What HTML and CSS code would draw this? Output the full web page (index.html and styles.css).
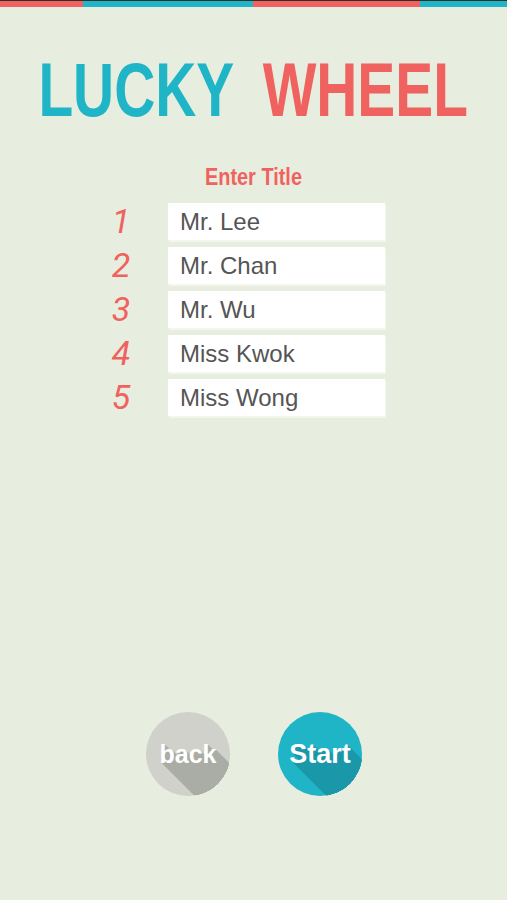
FILE: index.html
```html
<!DOCTYPE html>
<html>
<head>
    <title>Lucky Wheel</title>
    <link rel="stylesheet" href="styles.css">
</head>
<body>
    <div class="topbar">
        <span class="seg red"></span>
        <span class="seg teal"></span>
        <span class="seg red"></span>
        <span class="seg teal"></span>
    </div>

    <h1 class="title"><span class="narrow"><span class="lucky">LUCKY</span> <span class="wheel">WHEEL</span></span></h1>

    <div class="names">
        <h2 class="names-title"><span class="narrow">Enter Title</span></h2>
        <ol class="name-list">
            <li class="name-row"><span class="name-num">1</span><input class="name-input" type="text" value="Mr. Lee"></li>
            <li class="name-row"><span class="name-num">2</span><input class="name-input" type="text" value="Mr. Chan"></li>
            <li class="name-row"><span class="name-num">3</span><input class="name-input" type="text" value="Mr. Wu"></li>
            <li class="name-row"><span class="name-num">4</span><input class="name-input" type="text" value="Miss Kwok"></li>
            <li class="name-row"><span class="name-num">5</span><input class="name-input" type="text" value="Miss Wong"></li>
        </ol>
    </div>

    <div class="actions">
        <button class="round-btn back">back</button>
        <button class="round-btn start">Start</button>
    </div>
</body>
</html>
```

FILE: styles.css
```css
:root {
    --bg: #e7eedf;
    --teal: #1fb5c7;
    --teal-dark: #1a98a9;
    --red: #f0625f;
    --grey: #cfd1ca;
    --grey-dark: #aaaca6;
    --text: #555555;
}

body {
    margin: 0;
    background: var(--bg);
    font-family: 'Liberation Sans', Arial, sans-serif;
    min-height: 900px;
}

.topbar {
    display: grid;
    grid-template-columns: 83fr 170fr 167fr 87fr;
    height: 6px;
    border-top: 1px solid #2d2d2d;
}

.seg.red { background: var(--red); }
.seg.teal { background: var(--teal); }

/* no condensed face installed, so stretch/squeeze the bold one */
.narrow {
    display: inline-block;
    white-space: nowrap;
}

.title {
    margin: 45px 0 0;
    text-align: center;
    font-family: 'Liberation Sans', Arial, sans-serif;
    font-weight: 700;
    font-size: 58px;
    line-height: 76px;
    word-spacing: 14px;
}

.title .narrow {
    transform: scale(0.98, 1.31);
}

.lucky { color: var(--teal); }
.wheel { color: var(--red); }

.names {
    margin-top: 35px;
}

.names-title {
    margin: 0 0 12px;
    text-align: center;
    font-family: 'Liberation Sans', Arial, sans-serif;
    font-weight: 700;
    font-size: 24px;
    line-height: 28px;
    color: var(--red);
}

.names-title .narrow {
    transform: scaleX(0.83);
}

.name-list {
    list-style: none;
    margin: 0 0 0 100px;
    padding: 0;
    display: flex;
    flex-direction: column;
    gap: 7px;
}

.name-row {
    display: flex;
    align-items: center;
    gap: 26px;
}

.name-num {
    width: 42px;
    text-align: center;
    font-family: Roboto, sans-serif;
    font-style: italic;
    font-weight: 400;
    font-size: 34px;
    line-height: 37px;
    color: var(--red);
}

.name-input {
    width: 217px;
    height: 37px;
    box-sizing: border-box;
    border: none;
    padding: 0 12px;
    background: white;
    box-shadow: 1px 2px 0 rgba(255, 255, 255, 0.45);
    font-family: 'Liberation Sans', Arial, sans-serif;
    font-size: 24px;
    color: var(--text);
    outline: none;
}

.actions {
    display: flex;
    justify-content: center;
    gap: 48px;
    margin-top: 296px;
    padding-left: 1px;
}

.round-btn {
    width: 84px;
    height: 84px;
    padding: 0;
    border: none;
    border-radius: 50%;
    overflow: hidden;
    display: flex;
    align-items: center;
    justify-content: center;
    font-family: 'Liberation Sans', Arial, sans-serif;
    font-weight: 700;
    color: white;
    cursor: pointer;
}

.back {
    background: var(--grey);
    font-size: 25px;
    text-shadow: 1px 1px var(--grey-dark), 2px 2px var(--grey-dark), 3px 3px var(--grey-dark), 4px 4px var(--grey-dark),
        5px 5px var(--grey-dark), 6px 6px var(--grey-dark), 7px 7px var(--grey-dark), 8px 8px var(--grey-dark),
        9px 9px var(--grey-dark), 10px 10px var(--grey-dark), 11px 11px var(--grey-dark), 12px 12px var(--grey-dark),
        13px 13px var(--grey-dark), 14px 14px var(--grey-dark), 15px 15px var(--grey-dark), 16px 16px var(--grey-dark),
        17px 17px var(--grey-dark), 18px 18px var(--grey-dark), 19px 19px var(--grey-dark), 20px 20px var(--grey-dark),
        21px 21px var(--grey-dark), 22px 22px var(--grey-dark), 23px 23px var(--grey-dark), 24px 24px var(--grey-dark),
        25px 25px var(--grey-dark), 26px 26px var(--grey-dark), 27px 27px var(--grey-dark), 28px 28px var(--grey-dark),
        29px 29px var(--grey-dark), 30px 30px var(--grey-dark), 31px 31px var(--grey-dark), 32px 32px var(--grey-dark),
        33px 33px var(--grey-dark), 34px 34px var(--grey-dark), 35px 35px var(--grey-dark), 36px 36px var(--grey-dark),
        37px 37px var(--grey-dark), 38px 38px var(--grey-dark), 39px 39px var(--grey-dark), 40px 40px var(--grey-dark);
}

.start {
    background: var(--teal);
    font-size: 27px;
    text-shadow: 1px 1px var(--teal-dark), 2px 2px var(--teal-dark), 3px 3px var(--teal-dark), 4px 4px var(--teal-dark),
        5px 5px var(--teal-dark), 6px 6px var(--teal-dark), 7px 7px var(--teal-dark), 8px 8px var(--teal-dark),
        9px 9px var(--teal-dark), 10px 10px var(--teal-dark), 11px 11px var(--teal-dark), 12px 12px var(--teal-dark),
        13px 13px var(--teal-dark), 14px 14px var(--teal-dark), 15px 15px var(--teal-dark), 16px 16px var(--teal-dark),
        17px 17px var(--teal-dark), 18px 18px var(--teal-dark), 19px 19px var(--teal-dark), 20px 20px var(--teal-dark),
        21px 21px var(--teal-dark), 22px 22px var(--teal-dark), 23px 23px var(--teal-dark), 24px 24px var(--teal-dark),
        25px 25px var(--teal-dark), 26px 26px var(--teal-dark), 27px 27px var(--teal-dark), 28px 28px var(--teal-dark),
        29px 29px var(--teal-dark), 30px 30px var(--teal-dark), 31px 31px var(--teal-dark), 32px 32px var(--teal-dark),
        33px 33px var(--teal-dark), 34px 34px var(--teal-dark), 35px 35px var(--teal-dark), 36px 36px var(--teal-dark),
        37px 37px var(--teal-dark), 38px 38px var(--teal-dark), 39px 39px var(--teal-dark), 40px 40px var(--teal-dark);
}
```
